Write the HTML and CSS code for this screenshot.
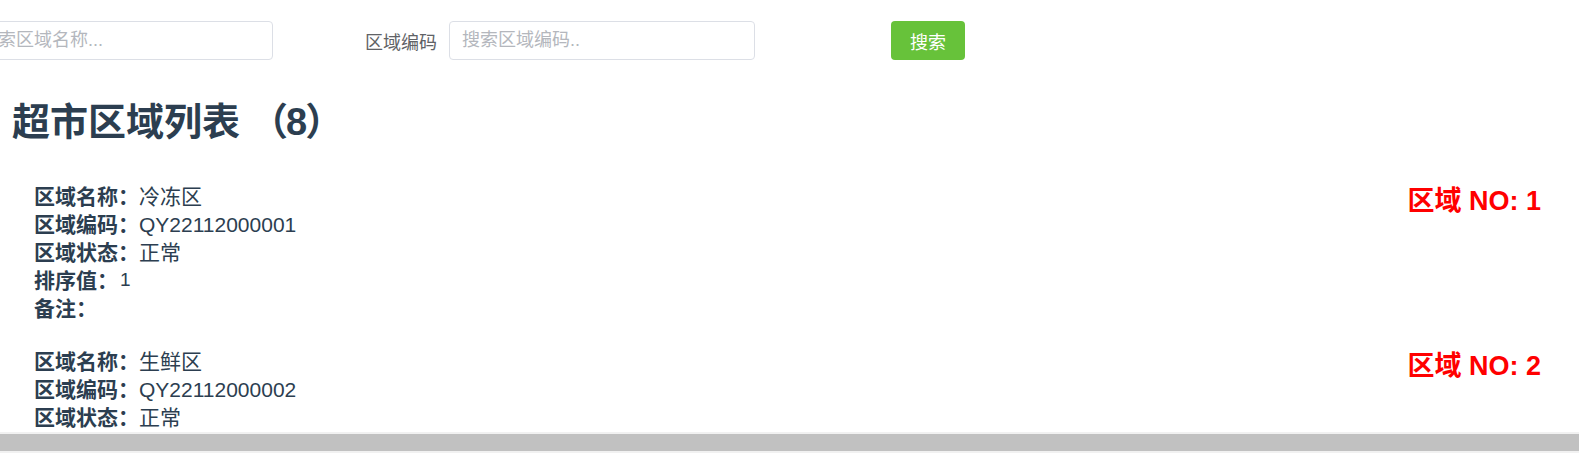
FILE: index.html
```html
<!DOCTYPE html>
<html lang="zh-CN">
<head>
    <meta charset="UTF-8">
    <meta name="viewport" content="width=device-width, initial-scale=1.0">
    <title>超市区域列表</title>
    <link rel="stylesheet" href="styles.css">
</head>
<body>

<!-- 搜索栏 -->
<form class="search">
    <div class="search-item">
        <label class="search-label">区域名称</label>
        <input class="search-input" type="text" placeholder="搜索区域名称...">
    </div>
    <div class="search-item">
        <label class="search-label">区域编码</label>
        <input class="search-input" type="text" placeholder="搜索区域编码..">
    </div>
    <button class="search-btn" type="button">搜索</button>
</form>

<h2 class="title">超市区域列表<span class="count">（8）</span></h2>

<!-- 区域列表 -->
<div class="area-list">
    <div class="area">
        <div class="area-info">
            <p><b>区域名称：</b>冷冻区</p>
            <p><b>区域编码：</b>QY22112000001</p>
            <p><b>区域状态：</b>正常</p>
            <p><b>排序值：</b><span class="num">1</span></p>
            <p><b>备注：</b></p>
        </div>
        <div class="area-no">区域 NO: 1</div>
    </div>
    <div class="area">
        <div class="area-info">
            <p><b>区域名称：</b>生鲜区</p>
            <p><b>区域编码：</b>QY22112000002</p>
            <p><b>区域状态：</b>正常</p>
            <p><b>排序值：</b><span class="num">2</span></p>
            <p><b>备注：</b></p>
        </div>
        <div class="area-no">区域 NO: 2</div>
    </div>
</div>

<!-- 横向滚动条 -->
<div class="hscroll"><div class="hscroll-thumb"></div></div>

</body>
</html>
```

FILE: styles.css
```css
body {
    font-family: "Liberation Sans", "Noto Sans CJK SC", sans-serif;
    margin: 0;
    padding: 0;
    color: #2c3e50;
    background-color: #fff;
    overflow: hidden;
}
.search {
    display: flex;
    align-items: center;
    padding-top: 21px;
    margin-left: -117px;
}
.search-item {
    display: flex;
    align-items: center;
    gap: 12px;
    margin-right: 92px;
}
.search-item:nth-child(2) {
    margin-right: 136px;
}
.search-label {
    width: 72px;
    font-size: 18px;
    color: #606266;
    white-space: nowrap;
}
.search-input {
    box-sizing: border-box;
    width: 306px;
    height: 39px;
    padding: 0 12px;
    border: 1px solid #dcdfe6;
    border-radius: 4px;
    font-family: inherit;
    font-size: 18px;
    color: #606266;
    outline: none;
}
.search-input::placeholder {
    color: #b4b7bd;
}
.search-btn {
    width: 74px;
    height: 39px;
    padding: 0;
    border: none;
    border-radius: 4px;
    background-color: #67c23a;
    color: #fff;
    font-family: inherit;
    font-size: 18px;
    cursor: pointer;
}
.title {
    margin: 43px 0 0;
    padding-left: 12px;
    font-size: 38px;
    line-height: 38px;
    font-weight: bold;
}
.title .count {
    margin-left: 10px;
    letter-spacing: -2px;
}
.area-list {
    margin-top: 42px;
}
.area {
    display: flex;
    justify-content: space-between;
    align-items: flex-start;
    padding: 0 38px 0 34px;
    margin-bottom: 25px;
}
.area-info p {
    margin: 0;
    font-size: 21px;
    line-height: 28px;
}
.area-info .num {
    font-size: 19px;
    line-height: 26px;
    vertical-align: top;
    margin-left: 2px;
}
.area-no {
    color: #f00;
    font-size: 27px;
    font-weight: bold;
    line-height: 37px;
}
.hscroll {
    position: fixed;
    left: 0;
    right: 0;
    bottom: 0;
    height: 21px;
    background-color: #f1f1f1;
    padding: 2px 0;
    box-sizing: border-box;
}
.hscroll-thumb {
    height: 100%;
    background-color: #c1c1c1;
}
```
